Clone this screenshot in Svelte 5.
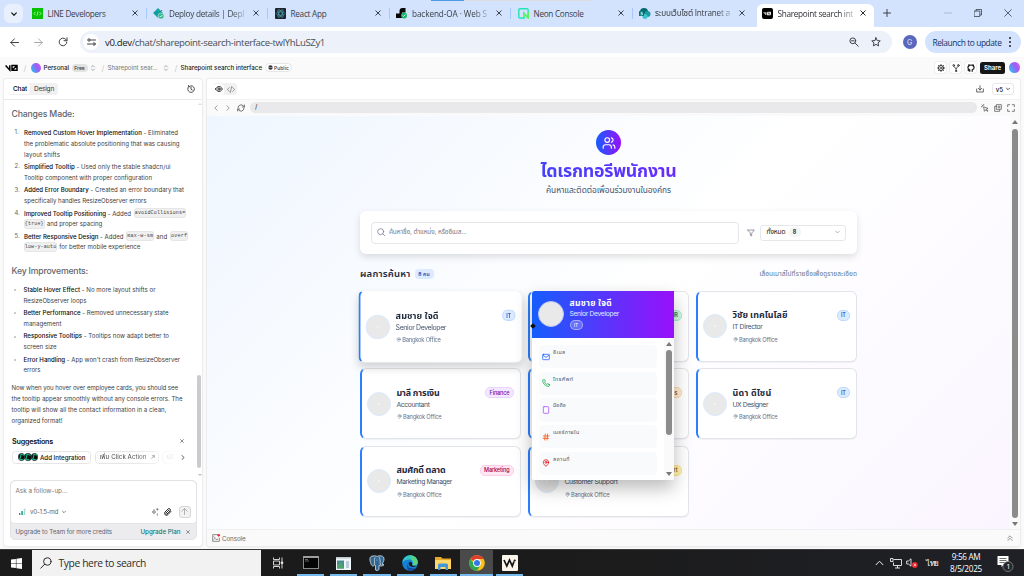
<script>
  // Spreads the letters of a single-line label over a given width.
  function fit(node, width) {
    node.style.letterSpacing = '0px';
    const a = node.getBoundingClientRect().width;
    node.style.letterSpacing = '1px';
    const b = node.getBoundingClientRect().width;
    node.style.letterSpacing = b > a ? `${(width - a) / (b - a)}px` : '0px';
  }

  const tabs = [
    { kind: 'line', title: 'LINE Developers', w: 58 },
    { kind: 'deploy', title: 'Deploy details | Depl', w: 75, fade: true },
    { kind: 'react', title: 'React App', w: 36 },
    { kind: 'render', title: 'backend-OA · Web S', w: 75, fade: true },
    { kind: 'neon', title: 'Neon Console', w: 50 },
    { kind: 'share', title: 'ระบบเว็บไซต์ Intranet ส', w: 75, fade: true },
    { kind: 'v0', title: 'Sharepoint search int', w: 75.5, fade: true, active: true }
  ];

  const changes = [
    [{ b: 'Removed Custom Hover Implementation', t: ' - Eliminated', w: 154 }, { t: 'the problematic absolute positioning that was causing', w: 155.5 }, { t: 'layout shifts', w: 36 }],
    [{ b: 'Simplified Tooltip', t: ' - Used only the stable shadcn/ui', w: 146.5 }, { t: 'Tooltip component with proper configuration', w: 128 }],
    [{ b: 'Added Error Boundary', t: ' - Created an error boundary that', w: 160 }, { t: 'specifically handles ResizeObserver errors', w: 122.5 }],
    [{ b: 'Improved Tooltip Positioning', t: ' - Added', w: 107, c: 'avoidCollisions=', cw: 50.5 }, { c0: '{true}', c0w: 19, t: 'and proper spacing', w: 55.5 }],
    [{ b: 'Better Responsive Design', t: ' - Added', w: 99.5, c: 'max-w-sm', cw: 26, t2: 'and', t2w: 11, c2: 'overf', c2w: 16 }, { c0: 'low-y-auto', c0w: 31.5, t: 'for better mobile experience', w: 81 }]
  ];
  const improvements = [
    [{ b: 'Stable Hover Effect', t: ' - No more layout shifts or', w: 132 }, { t: 'ResizeObserver loops', w: 63 }],
    [{ b: 'Better Performance', t: ' - Removed unnecessary state', w: 145 }, { t: 'management', w: 38 }],
    [{ b: 'Responsive Tooltips', t: ' - Tooltips now adapt better to', w: 145.5 }, { t: 'screen size', w: 33 }],
    [{ b: 'Error Handling', t: " - App won't crash from ResizeObserver", w: 156.5 }, { t: 'errors', w: 17 }]
  ];
  const closing = [
    ['Now when you hover over employee cards, you should see', 166.5],
    ['the tooltip appear smoothly without any console errors. The', 171],
    ['tooltip will show all the contact information in a clean,', 155],
    ['organized format!', 51]
  ];

  const people = [
    { name: 'สมชาย ใจดี', nw: 43, role: 'Senior Developer', rw: 50.5, dept: 'IT', dw: 4.5, tone: 'blue', hover: true },
    { name: '', role: '', dept: 'HR', dw: 7, tone: 'green', hidden: true },
    { name: 'วิชัย เทคโนโลยี', nw: 55, role: 'IT Director', rw: 30, dept: 'IT', dw: 4.5, tone: 'blue' },
    { name: 'มาลี การเงิน', nw: 43, role: 'Accountant', rw: 33, dept: 'Finance', dw: 20, tone: 'purple' },
    { name: '', role: '', dept: 'Sales', dw: 15, tone: 'orange', hidden: true },
    { name: 'นิดา ดีไซน์', nw: 39, role: 'UX Designer', rw: 35.5, dept: 'IT', dw: 4.5, tone: 'blue' },
    { name: 'สมศักดิ์ ตลาด', nw: 49, role: 'Marketing Manager', rw: 55.5, dept: 'Marketing', dw: 25.5, tone: 'pink' },
    { name: '', role: 'Customer Support', rw: 53, dept: 'Support', dw: 21, tone: 'yellow' }
  ];

  const contacts = [
    { icon: 'mail', label: 'อีเมล', w: 12.5 },
    { icon: 'phone', label: 'โทรศัพท์', w: 20.5 },
    { icon: 'mobile', label: 'มือถือ', w: 13 },
    { icon: 'hash', label: 'เบอร์ภายใน', w: 26.5 },
    { icon: 'pin', label: 'สถานที่', w: 17 }
  ];
  const apps = ['cmd', 'window', 'postgres', 'edge', 'folder', 'chrome', 'w'];
</script>

{#snippet line(l)}
  <div class="ln">
    {#if l.c0}<code use:fit={l.c0w}>{l.c0}</code>{/if}
    <span class="t" use:fit={l.w}>{#if l.b}<b>{l.b}</b>{/if}{l.t}</span>
    {#if l.c}<code use:fit={l.cw}>{l.c}</code>{/if}
    {#if l.t2}<span class="t" use:fit={l.t2w}>{l.t2}</span>{/if}
    {#if l.c2}<code use:fit={l.c2w}>{l.c2}</code>{/if}
  </div>
{/snippet}

{#snippet pin(s)}
  <svg width={s} height={s} viewBox="0 0 24 24" class="st"><path d="M20 10c0 5-5.500 10.200-8 12-2.500-1.800-8-7-8-12a8 8 0 0 1 16 0Z" /><circle cx="12" cy="10" r="3" /></svg>
{/snippet}

{#snippet updown()}
  <svg width="6" height="8" viewBox="0 0 24 28" class="st ud"><path d="m6 10 6-6 6 6M6 18l6 6 6-6" /></svg>
{/snippet}

<div class="screen">
  <div class="strip">
    <div class="peek"><i></i></div>
    <div class="tabsearch"><svg width="8" height="8" viewBox="0 0 8 8" class="st"><path stroke-width="1.300" d="M1.700 2.900 4 5.200l2.300-2.300" /></svg></div>
    {#each tabs as tab}
      <div class="tab" class:active={tab.active}>
        <span class="fav">
          {#if tab.kind === 'line'}
            <svg width="11" height="11" viewBox="0 0 11 11"><rect width="11" height="11" fill="#06c200" /><path d="M3.500 3.800 2 5.500l1.500 1.700M7.500 3.800 9 5.500 7.500 7.200M6 3.500 5 7.500" fill="none" stroke="#c9f5c8" stroke-width=".8" /></svg>
          {:else if tab.kind === 'deploy'}
            <svg width="11" height="11" viewBox="0 0 11 11"><path d="M5 0 10 5 5 10 0 5Z" fill="#10a7a2" /><path d="M2 4 5 6.500 9 2" stroke="#138e8b" fill="none" /><circle cx="8" cy="8" r="3" fill="#31b98b" stroke="#d3e3fd" stroke-width=".6" /><path d="m6.700 8 1 1 1.600-2" stroke="#fff" fill="none" stroke-width=".8" /></svg>
          {:else if tab.kind === 'react'}
            <svg width="11" height="11" viewBox="0 0 11 11"><rect width="11" height="11" rx="1" fill="#202329" /><g fill="none" stroke="#4ba6bd" stroke-width=".65"><ellipse cx="5.500" cy="5.500" rx="4.300" ry="1.700" /><ellipse cx="5.500" cy="5.500" rx="4.300" ry="1.700" transform="rotate(60 5.500 5.500)" /><ellipse cx="5.500" cy="5.500" rx="4.300" ry="1.700" transform="rotate(120 5.500 5.500)" /></g></svg>
          {:else if tab.kind === 'render'}
            <svg width="11" height="11" viewBox="0 0 11 11"><path d="M0 5.500h3.500V3a3 3 0 0 1 3-3h3v4.500H6V10H0Z" fill="#050505" /><circle cx="8" cy="7.500" r="3" fill="#19b16b" /><path d="m6.500 7.500 1 1 2-2" stroke="#fff" fill="none" stroke-width=".8" /></svg>
          {:else if tab.kind === 'neon'}
            <svg width="11" height="11" viewBox="0 0 11 11"><path d="M7 10H2Q.8 10 .8 9V2Q.8.800 2 .8h7q1.200 0 1.200 1.200v8L5.800 5v5" fill="none" stroke="#23e5b5" stroke-width="1.400" /><path d="M10.200 4v6L5.800 5v5" fill="none" stroke="#62f457" stroke-width="1.400" /></svg>
          {:else if tab.kind === 'share'}
            <svg width="12" height="11" viewBox="0 0 12 11"><circle cx="5" cy="4" r="4" fill="#036c70" /><circle cx="8.500" cy="6" r="3" fill="#1a9ba1" /><circle cx="6" cy="8.500" r="2.500" fill="#37c6d0" /><rect y="3" width="5" height="5" rx=".6" fill="#03787c" /><path d="M3.500 4.300H2v1.200h1.500v1.300H1.500" stroke="#fff" stroke-width=".6" fill="none" /></svg>
          {:else}
            <svg width="11" height="11" viewBox="0 0 11 11"><rect width="11" height="11" rx="2" fill="#000" /><path d="m1.700 4 2.200 2.700V4M5.500 4.300h3v2.500h-3zM5.500 6.800l3-2.500" fill="none" stroke="#fff" stroke-width=".9" /></svg>
          {/if}
        </span>
        <span class="tt" class:fade={tab.fade}><span class="t" use:fit={tab.w}>{tab.title}</span></span>
        <svg width="6" height="6" viewBox="0 0 6 6" class="st tx"><path d="m.8.800 4.400 4.400M5.200.800.800 5.200" /></svg>
      </div>
    {/each}
    <svg class="st plus" width="8" height="8" viewBox="0 0 8 8"><path d="M4 .5v7M.5 4h7" /></svg>
    <div class="wc">
      <svg class="st" width="8" height="8" viewBox="0 0 8 8"><path stroke-width=".7" stroke="#99a7bd" d="M.5 4h7" /></svg>
      <svg class="st" width="8" height="8" viewBox="0 0 8 8"><path stroke-width=".8" d="M.5 2h5.300v5.500H.5zM2 2V.5h5.500V6H6" /></svg>
      <svg class="st" width="8" height="8" viewBox="0 0 8 8"><path stroke-width=".8" d="m.7.700 6.600 6.600M7.300.700.700 7.300" /></svg>
    </div>
  </div>

  <div class="toolbar">
    <svg class="st" width="9" height="9" viewBox="0 0 9 9"><path d="M8.500 4.500H.8M4.500.800.800 4.500l3.700 3.700" /></svg>
    <svg class="st dim" width="9" height="9" viewBox="0 0 9 9"><path d="M.5 4.500h7.700M4.500.800l3.700 3.700-3.700 3.700" /></svg>
    <svg class="st" width="10" height="10" viewBox="0 0 10 10"><path d="M8.800 5A3.800 3.800 0 1 1 7.600 2.200L8.800 3.400M9 .8v2.900H6" /></svg>
    <div class="omni">
      <span class="site"><svg class="st" width="9" height="8" viewBox="0 0 9 8"><circle cx="2" cy="2" r="1.200" /><path d="M4.500 2h4M.5 6h4" /><circle cx="7" cy="6" r="1.200" /></svg></span>
      <span class="t url" use:fit={220}><em>v0.dev</em>/chat/sharepoint-search-interface-twlYhLuSZy1</span>
      <svg class="st zoom" width="10" height="10" viewBox="0 0 10 10"><circle cx="3.800" cy="3.800" r="2.900" /><path d="m6 6 3.300 3.300M2.500 3.800h2.600" /></svg>
      <svg class="st" width="10" height="10" viewBox="0 0 10 10"><path d="m5 .8 1.250 2.750 3 .35L7 5.950l.6 2.950L5 7.400 2.400 8.900 3 5.950.750 3.900l3-.35Z" /></svg>
    </div>
    <span class="avatar">G</span>
    <div class="relaunch"><span class="t" use:fit={69}>Relaunch to update</span><i></i></div>
  </div>

  <header class="crumbs">
    <svg width="13" height="8" viewBox="0 0 13 8" fill="none" stroke="#000" stroke-width="1.500"><path d="M.6 1.500 4.800 6V1.300M7 1.500h5v4.800H7zM7 6.300l5-4.800" /></svg>
    <s>/</s>
    <span class="orb"></span>
    <span class="t dark" use:fit={25.500}>Personal</span>
    <span class="free"><span class="t" use:fit={10.500}>Free</span></span>
    {@render updown()}
    <s class="s2">/</s>
    <span class="t grey" use:fit={50}>Sharepoint sear...</span>
    <span class="g2">{@render updown()}</span>
    <s class="s3">/</s>
    <span class="t dark" use:fit={81.500}>Sharepoint search interface</span>
    <span class="public"><svg width="5" height="5" viewBox="0 0 5 5"><circle cx="2.500" cy="2.500" r="2.200" fill="#333" /><path d="M0 2.500h5" stroke="#fff" stroke-width=".4" /></svg><span class="t" use:fit={15}>Public</span></span>
    <div class="hr">
      <span class="ib"><svg class="st" width="8" height="8" viewBox="0 0 24 24"><circle cx="12" cy="12" r="8" /><circle cx="12" cy="12" r="3" /><path d="M12 1v4M12 19v4M1 12h4M19 12h4M4 4l3 3M17 17l3 3M4 20l3-3M17 7l3-3" /></svg></span>
      <span class="ib"><svg class="st" width="8" height="8" viewBox="0 0 24 24"><circle cx="5" cy="4" r="2.500" /><circle cx="19" cy="4" r="2.500" /><circle cx="12" cy="21" r="2" /><path d="M5 7c0 4 7 3 7 7 0-4 7-3 7-7M12 14v5" /></svg></span>
      <span class="ib"><svg width="8" height="8" viewBox="0 0 8 8" class="st"><path stroke-width="1.200" d="M2.800 7.300V5.800C1.300 5.400.900 4.500.900 3.500.900 2 2.200 1 4 1s3.100 1 3.100 2.500c0 1-.4 1.900-1.900 2.300v1.500M1.700 2.500V.900l1.300.5M6.300 2.500V.900L5 1.400M2.700 6.700C1.900 6.900 1.500 6.500 1 6" /></svg></span>
      <span class="share"><span class="t" use:fit={17}>Share</span></span>
      <span class="orb big"></span>
    </div>
  </header>

  <main>
    <section class="chat">
      <div class="chead">
        <div class="seg"><span class="on"><span class="t" use:fit={14}>Chat</span></span><span class="t" use:fit={20}>Design</span></div>
        <svg class="st" width="8" height="8" viewBox="0 0 24 24"><path stroke-width="2.600" d="M5 5a10 10 0 1 0 7-3M12 6v7l4 2M5 1v4h4" /></svg>
      </div>
      <div class="scroll">
        <h3><span class="t" use:fit={63}>Changes Made:</span></h3>
        <ol>
          {#each changes as item, i}
            <li><span class="num">{i + 1}.</span><div>{#each item as l}{@render line(l)}{/each}</div></li>
          {/each}
        </ol>
        <h3 class="h2nd"><span class="t" use:fit={76.500}>Key Improvements:</span></h3>
        <ul>
          {#each improvements as item}
            <li><span class="dot"></span><div>{#each item as l}{@render line(l)}{/each}</div></li>
          {/each}
        </ul>
        <div class="closing">
          {#each closing as [text, w]}<div class="ln"><span class="t" use:fit={w}>{text}</span></div>{/each}
        </div>
        <div class="sug"><span class="t" use:fit={41}>Suggestions</span><svg class="st" width="4" height="4" viewBox="0 0 6 6"><path d="m.8.800 4.400 4.400M5.200.800.800 5.200" /></svg></div>
        <div class="chips">
          <span class="chip first"><span class="dots"><i></i><i></i><i></i></span><span class="t" use:fit={45.500}>Add Integration</span></span>
          <span class="chip"><span class="t" use:fit={47}>เพิ่ม Click Action</span><svg class="st" width="4" height="4" viewBox="0 0 6 6"><path d="m1 5 4-4M2 1h3v3" /></svg></span>
          <span class="chip last">ปรั</span>
          <svg class="st nx" width="4" height="5" viewBox="0 0 4 5"><path d="M1 .5 3 2.500 1 4.500" /></svg>
        </div>
        <div class="thumb"></div><div class="tri up"></div><div class="tri down"></div>
      </div>
      <div class="composer">
        <div class="box">
          <span class="t ask" use:fit={49.500}>Ask a follow-up...</span>
          <div class="tools">
            <svg width="7" height="7" viewBox="0 0 7 7"><path fill="#159b87" d="M0 5h1.300v2H0zM2.300 3h1.500v4H2.300z" /><path fill="#a7dcd2" d="M4.800.500h1.500V7H4.800z" /></svg>
            <span class="t" use:fit={28}>v0-1.5-md</span>
            <svg class="st" width="4" height="4" viewBox="0 0 4 4"><path stroke-width=".8" d="m.5 1.200 1.500 1.500 1.500-1.500" /></svg>
            <svg class="st spark" width="8" height="8" viewBox="0 0 24 24"><path stroke-width="2" d="M9 6c1 5 1 5 6 6-5 1-5 1-6 6-1-5-1-5-6-6 5-1 5-1 6-6ZM19 1v6M16 4h6M19 17v5" /></svg>
            <svg class="st clip" width="8" height="8" viewBox="0 0 24 24"><path stroke-width="3" d="m21 10-9 10a6 6 0 0 1-9-8l9-9a4 4 0 0 1 6 6l-9 9a2 2 0 0 1-3-3l8-8" /></svg>
            <span class="send"><svg class="st" width="7" height="7" viewBox="0 0 7 7"><path stroke-width=".9" d="M3.500 6.500v-6M.8 3.200 3.500.500l2.700 2.700" /></svg></span>
          </div>
        </div>
        <div class="upg"><span class="t" use:fit={96.500}>Upgrade to Team for more credits</span><span class="t teal" use:fit={40}>Upgrade Plan</span><svg class="st" width="4" height="4" viewBox="0 0 6 6"><path d="m.8.800 4.400 4.400M5.200.800.800 5.200" /></svg></div>
      </div>
    </section>

    <section class="preview">
      <div class="phead">
        <div class="seg2"><span><svg class="st" width="8" height="8" viewBox="0 0 24 24"><path stroke-width="2.500" d="M2 12C6 2 18 2 22 12 18 22 6 22 2 12Z" /><circle cx="12" cy="12" r="3.500" stroke-width="2.500" /></svg></span><svg class="st" width="8" height="7" viewBox="0 0 24 20"><path stroke-width="2.200" d="M7 4 1 10l6 6M17 4l6 6-6 6M14 1l-4 18" /></svg></div>
        <svg class="st dl" width="8" height="8" viewBox="0 0 24 24"><path d="M2 12v9h20v-9M12 2v13M7 10l5 5 5-5" /></svg>
        <span class="ver"><span class="t" use:fit={7.500}>v5</span><svg class="st" width="4" height="4" viewBox="0 0 4 4"><path stroke-width=".8" d="m.5 1.200 1.500 1.500 1.500-1.500" /></svg></span>
      </div>
      <div class="nav">
        <svg class="st" width="4" height="6" viewBox="0 0 4 6"><path stroke-width=".7" d="M3.200.7.800 3l2.400 2.300" /></svg>
        <svg class="st" width="4" height="6" viewBox="0 0 4 6"><path stroke-width=".7" d="M.8.700 3.200 3 .8 5.300" /></svg>
        <svg class="st rf" width="8" height="8" viewBox="0 0 24 24"><path d="M3 11a9 9 0 0 1 16-5l3 3M22 3v6h-6M21 13a9 9 0 0 1-16 5l-3-3M2 21v-6h6" /></svg>
        <div class="path">/</div>
        <div class="acts">
          <svg class="st" width="8" height="8" viewBox="0 0 24 24"><path d="m9 9 12 4-5 2 5 6-3 1-4-5-3 4ZM8 1v3M1 8h3M3 3l2 2" /></svg>
          <svg class="st" width="8" height="8" viewBox="0 0 24 24"><path d="M8 7H2v15h15v-5M8 2h14v14H8zM15 6v6M12 9h6" /></svg>
          <svg class="st" width="8" height="8" viewBox="0 0 24 24"><path d="M2 8V2h6M16 2h6v6M22 16v6h-6M8 22H2v-6" /></svg>
        </div>
      </div>
      <div class="page">
        <div class="wrap">
          <div class="hero">
            <span class="people"><svg width="14" height="14" viewBox="0 0 24 24" fill="none" stroke="#fff" stroke-width="2" stroke-linecap="round"><path d="M16 21v-2a4 4 0 0 0-4-4H6a4 4 0 0 0-4 4v2M22 21v-2a4 4 0 0 0-3-3.870M16 3.130a4 4 0 0 1 0 7.750" /><circle cx="9" cy="7" r="4" /></svg></span>
            <h1><span class="t" use:fit={136}>ไดเรกทอรีพนักงาน</span></h1>
            <p><span class="t" use:fit={125}>ค้นหาและติดต่อเพื่อนร่วมงานในองค์กร</span></p>
          </div>
          <div class="search">
            <div class="input"><svg class="st" width="8" height="8" viewBox="0 0 24 24"><circle cx="11" cy="11" r="9" /><path d="m18 18 5 5" /></svg><span class="t" use:fit={77.500}>ค้นหาชื่อ, ตำแหน่ง, หรืออีเมล...</span></div>
            <svg class="st" width="8" height="8" viewBox="0 0 24 24"><path d="M2 3h20l-8 9.500V21l-4-2v-6.500Z" /></svg>
            <div class="select"><span class="t" use:fit={19}>ทั้งหมด</span><i>8</i><svg class="st" width="5" height="4" viewBox="0 0 5 4"><path stroke-width=".6" d="M.5 1 2.500 3l2-2" /></svg></div>
          </div>
          <div class="results"><h2><span class="t" use:fit={50.500}>ผลการค้นหา</span></h2><span class="count"><span class="t" use:fit={11.500}>8 คน</span></span><span class="t hint" use:fit={97.500}>เลื่อนเมาส์ไปที่รายชื่อเพื่อดูรายละเอียด</span></div>
          <div class="grid">
            {#each people as p}
              <article class:hover={p.hover}>
                <span class="pic">{#if !p.hidden}<i></i>{/if}</span>
                <div class="info">
                  <strong>{#if p.name}<span class="t" use:fit={p.nw}>{p.name}</span>{/if}</strong>
                  <span class="role">{#if p.role}<span class="t" use:fit={p.rw}>{p.role}</span>{/if}</span>
                  <span class="loc">{#if !p.hidden}{@render pin(5)}<span class="t" use:fit={38.500}>Bangkok Office</span>{/if}</span>
                </div>
                <span class="badge {p.tone}"><span class="t" use:fit={p.dw}>{p.dept}</span></span>
              </article>
            {/each}
          </div>
        </div>
        <div class="tip">
          <div class="thead">
            <span class="pic"></span>
            <div><strong><span class="t" use:fit={42.500}>สมชาย ใจดี</span></strong><span class="trole"><span class="t" use:fit={49.500}>Senior Developer</span></span><em><span class="t" use:fit={4.500}>IT</span></em></div>
          </div>
          <div class="tbody">
            {#each contacts as c}
              <div class="row {c.icon}">
                {#if c.icon === 'mail'}
                  <svg class="st" width="8" height="8" viewBox="0 0 24 24"><rect x="2" y="4" width="20" height="16" rx="2" /><path d="m3 7 9 6 9-6" /></svg>
                {:else if c.icon === 'phone'}
                  <svg class="st" width="8" height="8" viewBox="0 0 24 24"><path d="M22 17v3a2 2 0 0 1-2 2A18 18 0 0 1 2 4a2 2 0 0 1 2-2h3a2 2 0 0 1 2 2c0 1 .3 2 .6 2.800L8 10a16 16 0 0 0 6 6l2.500-1.600c1 .3 2 .6 3 .6a2 2 0 0 1 2.500 2Z" /></svg>
                {:else if c.icon === 'mobile'}
                  <svg class="st" width="8" height="8" viewBox="0 0 24 24"><rect x="4" y="2" width="16" height="20" rx="2" /></svg>
                {:else if c.icon === 'hash'}
                  <svg class="st" width="8" height="8" viewBox="0 0 24 24"><path d="M4 9h17M3 16h17M10 3 8 21M17 3l-2 18" /></svg>
                {:else}
                  {@render pin(8)}
                {/if}
                <span class="t" use:fit={c.w}>{c.label}</span>
              </div>
            {/each}
          </div>
          <div class="tscroll"><b class="tri u"></b><i></i><b class="tri d"></b></div>
        </div>
        <span class="arrow"></span>
        <div class="pscroll"><b class="tri u"></b><i></i><b class="tri d"></b></div>
      </div>
      <div class="console"><svg class="st" width="8" height="8" viewBox="0 0 24 24"><path d="M16 2H2v20h20V12M6 8l4 4-4 4M12 16h5" /><circle cx="20" cy="4" r="3" fill="#ef2533" stroke="#ef2533" /></svg><span class="t" use:fit={23.500}>Console</span><svg class="st up2" width="6" height="6" viewBox="0 0 6 6"><path stroke-width=".7" d="m.8 3 2.200-2.200L5.200 3M.8 5.500 3 3.300l2.200 2.200" /></svg></div>
    </section>
  </main>

  <footer>
    <div class="start"><svg width="11" height="11" viewBox="0 0 11 11" fill="#fff"><path d="M0 1.600 4.900.900v4.300H0zM5.400.800 11 0v5.200H5.400zM0 5.800h4.900v4.300L0 9.400zM5.400 5.800H11V11l-5.600-.8z" /></svg></div>
    <div class="find"><svg class="st" width="12" height="12" viewBox="0 0 12 12"><circle cx="7.300" cy="4.500" r="3.700" /><path d="M4.700 7.200.8 11.200" /></svg><span class="t" use:fit={87.500}>Type here to search</span></div>
    <div class="app tv"><svg width="12" height="12" viewBox="0 0 12 12" fill="none" stroke="#e6e6e6" stroke-width=".9"><path d="M1.500.5v2h6v-2M1.500 11.500v-2h6v2M1.500 4h6v4h-6zM10 .5v11" /><path d="M9.200 5h1.600v1.500H9.200z" fill="#fff" /></svg></div>
    {#each apps as a}
      <div class="app" class:cur={a === 'chrome'}>
        {#if a === 'cmd'}
          <svg width="16" height="14" viewBox="0 0 16 14"><rect x=".5" y=".5" width="15" height="12" fill="#050505" stroke="#8a8a8a" /><path d="M.5 1.200h15" stroke="#bbb" stroke-width="1.300" /><path d="M2 3.500h3M2 5h4" stroke="#aaa" stroke-width=".6" /></svg>
        {:else if a === 'window'}
          <svg width="15" height="13" viewBox="0 0 15 13"><rect width="15" height="13" fill="#f3f5f6" /><rect width="15" height="1.500" fill="#bcc8ce" /><rect x="1" y="3.500" width="7" height="8" fill="#4c8a94" /><path d="M1 8 5 5l3 6.500H1z" fill="#4fa56f" /><path d="M10 4h3v7h-3z" fill="#b8cddb" /></svg>
        {:else if a === 'postgres'}
          <svg width="16" height="16" viewBox="0 0 16 16"><path d="M4 1C.5 1 .5 4 1.500 7.500 2.500 11 4 12 5.500 10l1 .5V15q2 1.500 3.500-.5V10.500c2 1 4 .5 5-.8l-2-.5C15.500 6 16 1.500 12.500 1 10 .5 9 1 8 1.500 7 .8 5 .8 4 1Z" fill="#336791" stroke="#d7e3ec" stroke-width=".8" /><path d="M6 2.500C4.500 5 6 7 5.500 10M10 2c2 3 .5 5 1.500 8M7.500 5h1" fill="none" stroke="#d7e3ec" stroke-width=".7" /></svg>
        {:else if a === 'edge'}
          <svg width="16" height="16" viewBox="0 0 16 16"><circle cx="8" cy="8" r="7.800" fill="#1680d6" /><path d="M.3 8C1 2 5 .2 8 .2c5 0 8 3.800 7.800 7.300-.3 3-3.500 3.800-5.500 2.500C12 7 10 4.500 7 4.500 4 4.500 1 6 .3 8Z" fill="#35c6c4" /><path d="M8 .2c5 0 8 3.800 7.800 7.300-.3 3-3.500 3.800-5.500 2.500.9-1 1-2 .6-3Z" fill="#63d86d" opacity=".75" /><path d="M5.500 9.500c0 3 4 5 8.500 3.300C12 15.500 10 16 8 15.800 4.500 15 3.500 9.500 7.500 7 6 7.500 5.500 8.500 5.500 9.500Z" fill="#12499b" /><path d="M7.500 7q2-.5 2.600 1.200c.4 1-.5 1.500 0 2 1.200 1 3.400.8 4.700-.2q-1 2-3.800 2C7.500 12 5.500 9 7.500 7Z" fill="#1c1c1c" /></svg>
        {:else if a === 'folder'}
          <svg width="16" height="14" viewBox="0 0 16 14"><path d="M0 1h6l1.500 1.500H16V12H0z" fill="#e7a92c" /><path d="M0 4h16v9H0z" fill="#ffd768" /><path d="M3 14V9q0-1.500 1.500-1.500h7Q13 7.500 13 9v5h-2.500v-3h-5v3z" fill="#4397d7" /></svg>
        {:else if a === 'chrome'}
          <svg width="16" height="16" viewBox="0 0 16 16"><circle cx="8" cy="8" r="7.800" fill="#fbc116" /><path d="M8 8 1.250 4.100A7.800 7.800 0 0 1 14.750 4.100H8Z" fill="#e33b2e" /><path d="M1.250 4.100A7.800 7.800 0 0 0 8 15.800L11.400 10 8 8H4.600Z" fill="#2da94f" /><circle cx="8" cy="8" r="3.900" fill="#fff" /><circle cx="8" cy="8" r="3" fill="#3778e8" /></svg>
        {:else}
          <svg width="16" height="16" viewBox="0 0 16 16"><rect width="16" height="16" rx="1" fill="#faf4ea" /><path d="m2 5 2.800 6L7.500 5l2.800 6L12 6.500" fill="none" stroke="#111" stroke-width="1.700" /><circle cx="12.700" cy="5.500" r="1.100" fill="#111" /></svg>
        {/if}
        <u></u>
      </div>
    {/each}
    <div class="tray">
      <svg width="9" height="6" viewBox="0 0 9 6" fill="none" stroke="#eee"><path d="m.8 5 3.700-3.800L8.200 5" /></svg>
      <svg class="net" width="12" height="11" viewBox="0 0 12 11" fill="none" stroke="#eee" stroke-width=".9"><path d="M3.500 1.500h8v6h-8v-3M5 10h5M7.500 7.500V10M.5.500h2.500v3H.5z" /></svg>
      <svg class="vol" width="12" height="10" viewBox="0 0 12 10"><path d="M.7 3h1.800L5 .8v7.400L2.500 6H.7z" fill="none" stroke="#eee" stroke-width=".9" /><circle cx="8.800" cy="7" r="2.900" fill="#e02a33" /><path d="m7.600 5.800 2.400 2.400M10 5.800 7.600 8.200" stroke="#fff" stroke-width=".7" /></svg>
      <span class="t lang" use:fit={12}>ไทย</span>
      <div class="clock"><span class="t" use:fit={28.500}>9:56 AM</span><span class="t" use:fit={32}>8/5/2025</span></div>
      <svg width="17" height="18" viewBox="0 0 17 18"><path d="M.5 2h11v9H6.500L4.500 13v-2h-4z" fill="#fff" /><path d="M2.500 4.500h7M2.500 6.500h7M2.500 8.500h5" stroke="#333" stroke-width=".7" /><circle cx="11" cy="12.500" r="5" fill="#25262a" stroke="#999" stroke-width=".7" /><text x="9.300" y="15.300" fill="#fff" font-size="7.500" font-family="Open Sans, sans-serif">1</text></svg>
    </div>
  </footer>
</div>

<style>
  :global(body) { margin: 0; overflow: hidden; }
  .screen { width: 1024px; height: 576px; overflow: hidden; display: flex; flex-direction: column; background: #f7f7f8; font-family: Inter, "Noto Sans Thai", "Noto Sans", sans-serif; font-size: 6px; color: #333; }
  .screen :global(*) { box-sizing: border-box; }
  .t { display: inline-block; white-space: nowrap; flex: none; }
  svg { flex: none; display: block; }
  .st { fill: none; stroke: currentColor; stroke-linecap: round; stroke-linejoin: round; stroke-width: 1; }
  .st[viewBox^="0 0 24"] { stroke-width: 2.2; }
  em { font-style: normal; }
  h1, h2, h3, p, ol, ul { margin: 0; padding: 0; list-style: none; }

  .strip { height: 27px; background: #d3e3fd; display: flex; position: relative; flex: none; color: #3a4048; }
  .peek { position: absolute; left: 431px; top: 0; width: 161px; height: 1px; background: #dadde2; }
  .peek i { display: block; width: 33px; height: 1px; background: #4a9be4; }
  .tabsearch { width: 19px; height: 19px; margin: 4px 2.500px 0 4px; border-radius: 6px; background: #e9f0fd; display: flex; align-items: center; justify-content: center; flex: none; color: #222; }
  .tab { width: 121.500px; height: 23px; margin-top: 4px; padding: 0 9.500px 5px 6px; display: flex; align-items: center; position: relative; flex: none; font: 8.200px "Open Sans", "Noto Sans Thai", sans-serif; }
  .tab:not(.active)::after { content: ""; position: absolute; right: .500px; top: 4px; height: 11px; width: 1px; background: #a8c7fa; }
  .tab:nth-child(8)::after { display: none; }
  .tab.active { background: #fff; border-radius: 6px 6px 0 0; width: 117px; margin-left: 2px; padding-left: 5px; padding-right: 7.500px; color: #2b2e33; }
  .fav { width: 16px; flex: none; }
  .tt { width: 77px; flex: none; white-space: nowrap; }
  .fade { mask-image: linear-gradient(90deg, #000 80%, #0003); }
  .tx { margin-left: auto; }
  .plus { margin: 9px 0 0 9px; }
  .wc { margin: 9px 12px 0 auto; display: flex; gap: 22px; }

  .toolbar { height: 30px; background: #fff; display: flex; align-items: center; flex: none; padding: 0 4px 0 10px; gap: 15px; color: #3f4247; }
  .dim { color: #a8abb0; }
  .omni { width: 812px; height: 22px; border-radius: 11px; background: #ecf1fa; display: flex; align-items: center; padding: 0 11px 0 3px; margin-left: -3px; flex: none; }
  .site { width: 16px; height: 16px; border-radius: 50%; background: #fff; display: flex; align-items: center; justify-content: center; }
  .url { font: 9.600px "Open Sans", sans-serif; color: #4a4e55; margin-left: 6px; }
  .url em { color: #202226; }
  .zoom { margin-left: auto; margin-right: 12px; }
  .avatar { width: 14px; height: 14px; margin-left: -4.500px; border-radius: 50%; background: #5968bd; color: #e8eaf8; font-size: 7px; display: flex; align-items: center; justify-content: center; flex: none; }
  .relaunch { width: 96px; height: 22px; margin-left: -7px; border-radius: 11px; background: #d3e3fd; display: flex; align-items: center; padding-left: 8px; font: 8.400px "Open Sans", sans-serif; color: #143066; flex: none; }
  .relaunch i { width: 2px; height: 2px; border-radius: 50%; background: #222; box-shadow: 0 -4px #222, 0 4px #222; margin-left: 7px; }

  .crumbs { height: 22px; background: #fafafa; display: flex; align-items: center; padding: 0 4px 1px 5px; flex: none; font-size: 6.200px; }
  .crumbs s { text-decoration: none; color: #ccc; font-size: 8px; width: 6px; margin-left: 5.500px; }
  .crumbs .s2, .crumbs .s3 { margin-left: 5.500px; }
  .dark { color: #1c1c1c; font-weight: 500; }
  .grey { color: #777; }
  .orb { width: 10px; height: 10px; border-radius: 50%; background: linear-gradient(60deg, #35b5f6 15%, #a05bf2 60%, #e257f4); margin: 0 2.500px 0 1.500px; flex: none; }
  .orb.big { width: 11px; height: 11px; margin: 0; }
  .free { height: 8px; width: 16px; display: flex; align-items: center; justify-content: center; margin: 0 2.500px 0 2.500px; border-radius: 4px; background: #e2e2e2; font-size: 5px; font-weight: 500; }
  .ud { color: #666; }
  .g2 { margin-left: 5.500px; }
  .public { display: flex; align-items: center; gap: 1px; height: 9px; padding: 0 2px; margin-left: 3px; border: 1px solid #e5e5e5; border-radius: 5px; font-size: 4.800px; background: #fff; font-weight: 500; }
  .hr { display: flex; align-items: center; margin-left: auto; gap: 4px; color: #222; }
  .ib { width: 11px; height: 11px; border-radius: 2px; background: #fff; box-shadow: 0 0 0 .500px #e4e4e4; display: flex; align-items: center; justify-content: center; }
  .share { width: 25px; height: 12px; background: #151517; border-radius: 2.500px; color: #fff; display: flex; align-items: center; justify-content: center; font-weight: 600; }

  main { flex: 1; display: flex; gap: 5px; padding: 0 4px 3px; min-height: 0; background: #fafafa; }
  .chat, .preview { background: #fff; border-radius: 3px; box-shadow: 0 0 0 1px #ececee, 0 1px 2px #0002; display: flex; flex-direction: column; overflow: hidden; }
  .chat { width: 198px; flex: none; }
  .preview { width: 813px; flex: none; }
  .chead { height: 21px; border-bottom: 1px solid #e9e9ea; display: flex; align-items: center; justify-content: space-between; padding: 0 7.500px 1px 5px; flex: none; }
  .seg { display: flex; align-items: center; background: #f1f1f2; border-radius: 3px; height: 12px; width: 49px; font-size: 6.500px; gap: 4px; color: #333; }
  .on { background: #fff; height: 11px; display: flex; align-items: center; padding: 0 3px 0 4px; border-radius: 3px; color: #000; font-weight: 500; }
  .scroll { flex: 1; padding-left: 7.500px; position: relative; overflow: hidden; min-height: 0; }
  h3 { font-size: 8.700px; font-weight: 500; color: #62656d; line-height: 12px; margin: 8.200px 0 7.300px; }
  h3.h2nd { margin: 13.200px 0 6.800px; }
  .ln { height: 10.700px; display: flex; align-items: center; gap: 3px; font-size: 6.100px; white-space: nowrap; color: #3d3d40; }
  .ln b { font-weight: 500; color: #0c0c0d; }
  li { display: flex; margin-bottom: 1.800px; }
  .num { width: 12.500px; font-size: 6px; line-height: 10.700px; color: #666; padding-left: 3px; }
  .dot { width: 12px; padding: 5px 0 0 2px; }
  .dot::before { content: ""; display: block; width: 2px; height: 2px; background: #bbb; border-radius: 50%; }
  code { font: 5px "Liberation Mono", monospace; background: #f0f0f1; border-radius: 1.500px; box-shadow: 0 0 0 .800px #dededf; margin: 0 0 0 .800px; padding: 1px 0; color: #444; }
  .closing { padding-top: 5.700px; }
  .sug { display: flex; justify-content: space-between; align-items: center; height: 12px; margin: 9.700px 18px 0 .500px; font-size: 7.200px; font-weight: 600; color: #111; }
  .sug svg, .nx { color: #555; }
  .chips { display: flex; align-items: center; margin-top: 3.500px; gap: 3.500px; width: 176px; }
  .chip { height: 13px; border: 1px solid #e6e6e6; border-radius: 3.500px; display: flex; align-items: center; gap: 4px; padding: 0 4px 0 4px; color: #4a4a4a; background: linear-gradient(90deg, #fbfbfb, #fff); font-size: 6.200px; flex: none; width: 64px; }
  .chip:nth-child(2) { mask-image: linear-gradient(90deg, #000 55%, #0008); }
  .chip.first { width: 79.500px; color: #111; font-weight: 500; background: #fff; gap: 3px; padding-left: 5px; }
  .chip.last { width: 15px; opacity: .3; border-right: 0; mask-image: linear-gradient(90deg, #000, transparent); }
  .dots { display: flex; }
  .dots i { width: 7.500px; height: 7.500px; border-radius: 50%; background: #0b0d0d; border: .700px solid #333; margin-right: -1px; display: flex; align-items: center; justify-content: center; }
  .dots i::after { content: ""; width: 2.500px; height: 3.500px; border: .800px solid #15c794; border-right: 0; transform: rotate(15deg); }
  .thumb { position: absolute; right: 1px; top: 274.500px; width: 4px; height: 93px; border-radius: 2px; background: #cbcbcd; }
  .tri { width: 0; height: 0; border: 2.500px solid transparent; }
  .tri.up, .tri.down { position: absolute; right: .500px; }
  .tri.up { top: 1px; border-bottom-color: #ddd; }
  .tri.down { top: 374px; border-top-color: #bbb; }
  .composer { margin: 0 5.500px 6px 6px; height: 60px; background: #ececee; border: 1px solid #e3e3e5; border-radius: 5px; flex: none; overflow: hidden; }
  .box { height: 43px; background: #fff; border-radius: 5px 5px 4px 4px; padding: 6px 5px 0; border-bottom: 1px solid #e3e3e5; }
  .ask { color: #777; font-size: 6.300px; line-height: 9px; display: block; margin-left: -.500px; }
  .tools { display: flex; align-items: center; color: #666; gap: 4px; padding-left: 3px; margin-top: 8.500px; font-size: 6.300px; height: 14px; }
  .spark { margin-left: auto; }
  .clip { color: #333; margin: 0 3px 0 1px; }
  .send { width: 12px; height: 12px; border: 1px solid #d6d6d6; border-radius: 3px; background: #f2f2f3; display: flex; align-items: center; justify-content: center; color: #aaa; }
  .upg { height: 15px; display: flex; align-items: center; padding: 0 6px 0 4.500px; color: #596273; font-size: 6.200px; }
  .teal { color: #087a76; font-weight: 500; margin-left: auto; margin-right: 5px; }

  .phead { height: 20px; display: flex; align-items: center; padding: 0 6px 0 6px; flex: none; }
  .seg2 { display: flex; align-items: center; width: 24px; height: 12px; background: #f1f1f2; border-radius: 3px; gap: 2.500px; color: #777; }
  .seg2 span { background: #fff; color: #111; width: 11px; height: 11px; border-radius: 3px; display: flex; align-items: center; justify-content: center; }
  .dl { margin-left: auto; margin-right: 8px; }
  .ver { width: 22px; height: 12px; border: 1px solid #e8e8e8; border-radius: 3px; display: flex; align-items: center; justify-content: center; gap: 3px; font-size: 6.200px; font-weight: 500; color: #222; }
  .nav { height: 17px; background: #fafafa; border-top: 1px solid #f2f2f2; display: flex; align-items: center; gap: 8px; padding: 0 5px 1px 7px; color: #777; flex: none; }
  .rf { margin-left: -1px; color: #444; }
  .path { width: 727px; height: 11px; border-radius: 5.500px; background: #e9e9eb; padding-left: 5px; font-size: 6.500px; line-height: 11px; margin-left: -3px; color: #222; flex: none; }
  .acts { display: flex; gap: 5px; margin-left: -4px; color: #555; }
  .page { height: 413px; background: linear-gradient(135deg, #eff6ff 0%, #fff 50%, #faf5ff 100%); position: relative; flex: none; overflow: hidden; padding-left: 153px; }
  .wrap { width: 497px; }
  .hero { display: flex; flex-direction: column; align-items: center; padding-top: 14px; }
  .people { width: 25px; height: 25px; border-radius: 50%; background: linear-gradient(90deg, #155dfc, #9810fa); display: flex; align-items: center; justify-content: center; }
  h1 { font-size: 17.800px; line-height: 24px; height: 24px; margin-top: 5px; font-weight: 700; background: linear-gradient(90deg, #155dfc, #9810fa); background-clip: text; color: transparent; width: 497px; text-align: center; font-family: "Noto Sans Thai", "Open Sans", sans-serif; }
  p { font-size: 8.400px; line-height: 12px; height: 12px; margin-top: 0; color: #45556c; }
  .search { height: 43px; margin-top: 15px; border-radius: 6px; background: #fff; box-shadow: 0 3px 7px rgba(0, 0, 0, .13); display: flex; align-items: center; padding: 0 11px; gap: 8px; color: #71788a; }
  .input { width: 368px; height: 22px; border: 1px solid #e5e7eb; border-radius: 4px; display: flex; align-items: center; gap: 4.500px; padding: 0 0 2px 4.500px; font-size: 6.500px; }
  .select { width: 86px; height: 16px; border: 1px solid #e5e7eb; border-radius: 3px; display: flex; align-items: center; padding: 0 5.500px 1px; font-size: 6.600px; color: #111; margin-left: -3px; }
  .select i { width: 12px; height: 10px; border-radius: 5px; background: #f3f4f6; font-style: normal; text-align: center; line-height: 10px; font-size: 5.500px; font-weight: 600; margin-left: 3px; }
  .select svg { margin-left: auto; color: #888; }
  .results { height: 12px; margin-top: 14px; display: flex; align-items: center; }
  h2 { font-size: 9.500px; color: #1d293d; line-height: 12px; height: 12px; font-weight: 600; }
  .count { height: 10px; width: 19px; border-radius: 4px; background: #dbeafe; color: #193cb8; font-size: 5px; font-weight: 600; display: flex; align-items: center; justify-content: center; margin-left: 4px; }
  .hint { margin-left: auto; color: #62748e; font-size: 6.500px; }
  .grid { display: grid; grid-template-columns: repeat(3, 161px); grid-auto-rows: 71px; gap: 6.600px 7px; margin-top: 10.500px; }
  article { background: #fff; border: 1px solid #e1e4e8; border-left: 2px solid #2b7fff; border-radius: 6px; display: flex; align-items: center; padding: 0 6px 0 5px; box-shadow: 0 1px 1px #0000000d; }
  .hover { transform: scale(1.02); border-color: #f1f2f4; border-left-color: #2b7fff; box-shadow: 0 5px 8px rgba(0, 0, 0, .16); }
  .pic { width: 24px; height: 24px; border-radius: 50%; background: #e9e9ea; border: 1px solid #dbeafe; flex: none; display: flex; align-items: center; justify-content: center; }
  .pic i { width: 2px; height: 2px; border-radius: 50%; background: #f4f4f4; }
  .info { margin-left: 5.500px; display: flex; flex-direction: column; margin-top: 1px; }
  .info strong { height: 13px; line-height: 13px; font-size: 8.900px; color: #1d293d; font-weight: 700; }
  .role { height: 12px; line-height: 12px; font-size: 6.800px; color: #45556c; }
  .loc { height: 12px; display: flex; align-items: center; gap: 1.500px; font-size: 5.700px; color: #62748e; }
  .badge { height: 11px; border-radius: 5px; padding: 0 3.500px; display: flex; align-items: center; margin-left: auto; margin-bottom: 22px; font-size: 5.500px; font-weight: 500; border: 1px solid; }
  .blue { background: #dbeafe; border-color: #bedbff; color: #193cb8; }
  .green { background: #d0fae5; border-color: #a4f4cf; color: #006045; }
  .purple { background: #f3e8ff; border-color: #e9d4ff; color: #6e11b0; }
  .orange { background: #ffedd4; border-color: #ffd6a7; color: #9f2d00; }
  .pink { background: #fce7f3; border-color: #fccee8; color: #a3004c; }
  .yellow { background: #fef3b0; border-color: #fee685; color: #894b00; }
  .tip { position: absolute; left: 325px; top: 175px; width: 142px; height: 189px; background: #fff; border-radius: 3px 0 2px 2px; box-shadow: 0 8px 18px rgba(0, 0, 0, .27); overflow: hidden; }
  .thead { height: 47px; background: linear-gradient(90deg, #155dfc, #9810fa); color: #fff; display: flex; align-items: center; padding: 0 0 1px 6px; }
  .thead .pic { width: 26px; height: 26px; border: 1px solid #b9c8fa; }
  .thead div { margin-left: 5.500px; display: flex; flex-direction: column; align-items: flex-start; }
  .thead strong { font-size: 8.500px; line-height: 11px; height: 11px; }
  .trole { font-size: 6.800px; line-height: 10px; height: 10px; color: #dbeafe; }
  .thead em { height: 10px; width: 13px; border: .700px solid #ffffff70; background: #ffffff38; border-radius: 5px; display: flex; align-items: center; justify-content: center; font-size: 5px; margin-top: 1px; }
  .tbody { padding: 7px 0 0 7px; display: flex; flex-direction: column; gap: 3.500px; }
  .row { width: 118px; height: 23.200px; background: #f8fafc; border-radius: 4px; display: flex; align-items: center; padding-left: 3px; gap: 3px; font-size: 5.300px; flex: none; }
  .row .t { color: #45556c; margin-bottom: 9px; line-height: 8px; }
  .mail { color: #155dfc; }
  .phone { color: #00a63e; }
  .mobile { color: #ad46ff; }
  .hash { color: #f54900; }
  .pin { color: #e7000b; }
  .tscroll, .pscroll { position: absolute; right: 0; background: #fafafa; display: flex; flex-direction: column; align-items: center; }
  .tscroll { top: 47px; width: 10px; height: 142px; }
  .tscroll i { width: 6px; height: 85px; border-radius: 3px; background: #8b8b8b; margin-top: 4px; }
  .tri.u { border-width: 0 3px 4px; border-bottom-color: #777; margin-top: 4px; }
  .tri.d { border-width: 4px 3px 0; border-top-color: #777; }
  .tscroll .d { margin-top: 37px; }
  .arrow { position: absolute; left: 324px; top: 208px; width: 4px; height: 4px; background: #111; transform: rotate(45deg); }
  .pscroll { top: 0; width: 10px; height: 413px; }
  .pscroll i { width: 6px; height: 389px; border-radius: 3px; background: #8b8b8b; margin: 5px 0 4px; }
  .console { height: 17px; background: #fafafa; border-top: 1px solid #f0f0f0; display: flex; align-items: center; gap: 2px; padding: 0 7px 0 5px; color: #666; font-size: 6.200px; }
  .up2 { margin-left: auto; }

  footer { height: 27px; background: linear-gradient(90deg, #1b1b1b 55%, #202127); display: flex; flex: none; border-top: 1px solid #3a3a3a; }
  .start { width: 32px; display: flex; align-items: center; justify-content: center; }
  .find { width: 229px; background: #f2f2f2; display: flex; align-items: center; padding-left: 8px; gap: 6.500px; font: 10.300px "Open Sans", sans-serif; color: #2c2c2c; }
  .app { width: 33.200px; position: relative; display: flex; align-items: center; justify-content: center; }
  .app.tv { width: 33px; }
  .app u { position: absolute; left: 3px; right: 3px; bottom: 0; height: 2px; background: #76b9ed; }
  .cur { background: #4a4a4b; }
  .cur u { left: 0; right: 0; }
  .tray { margin-left: auto; display: flex; align-items: center; padding-right: 10px; color: #fff; font-family: "Open Sans", sans-serif; }
  .net { margin-left: 6px; }
  .vol { margin-left: 4px; }
  .lang { font-size: 8px; margin-left: 8px; }
  .clock { width: 34px; margin: 0 14px 0 10.500px; display: flex; flex-direction: column; align-items: center; font-size: 8.200px; line-height: 12.500px; }
</style>
